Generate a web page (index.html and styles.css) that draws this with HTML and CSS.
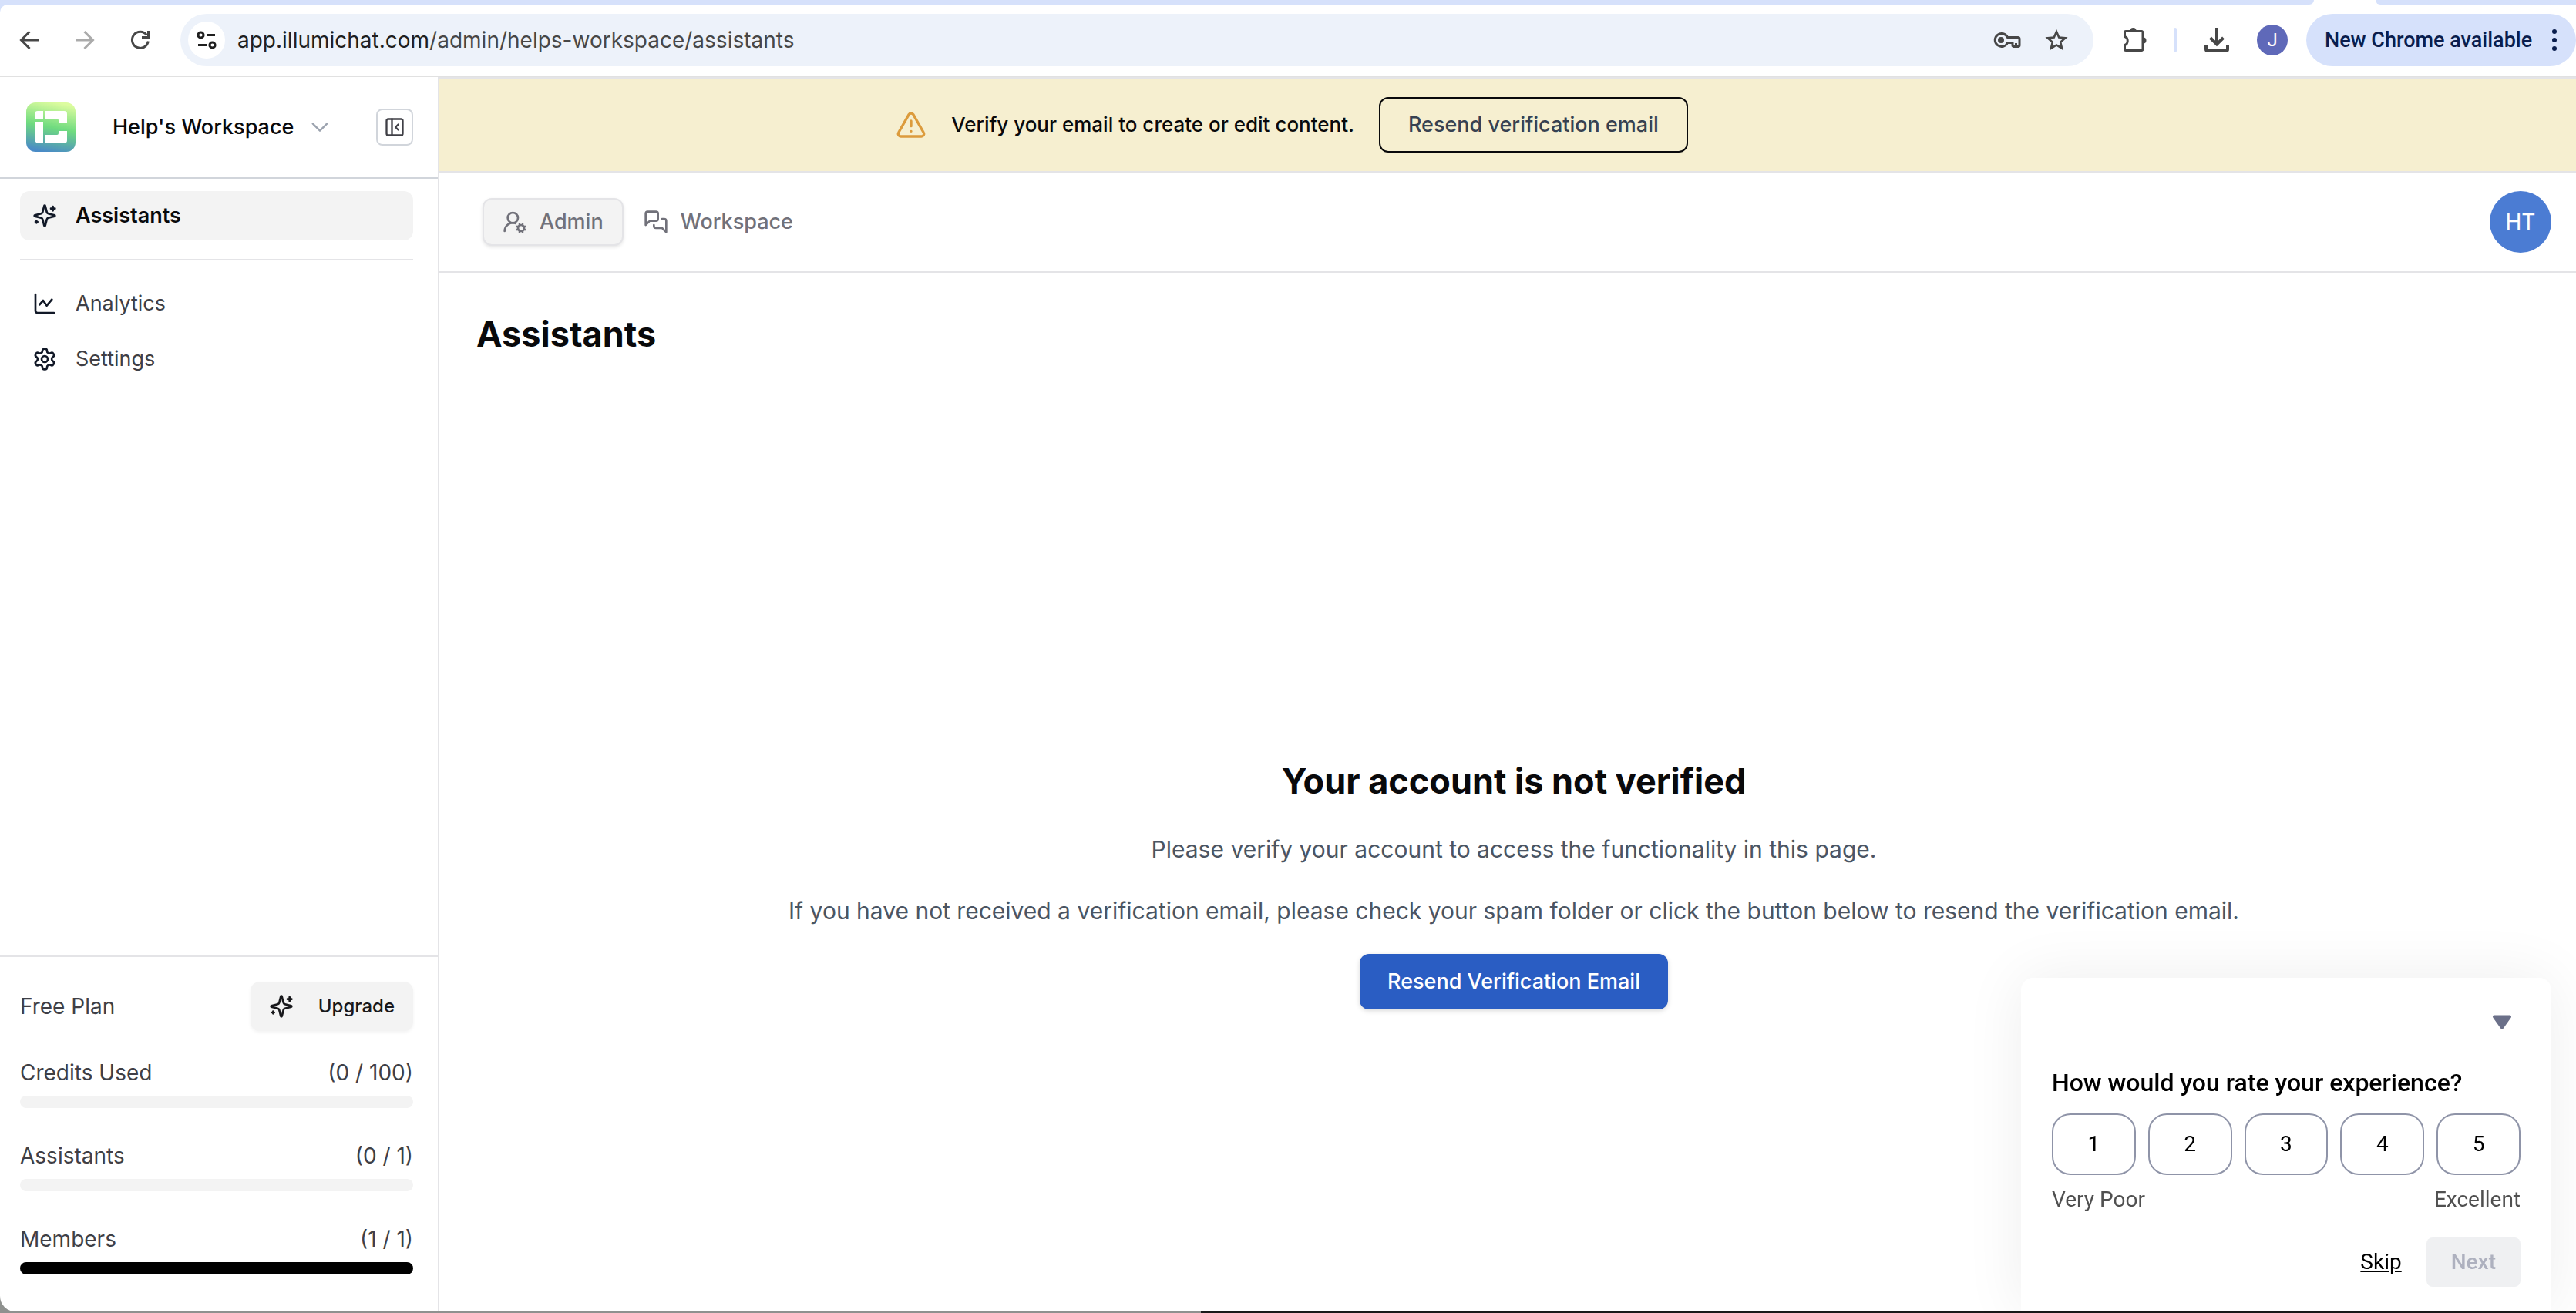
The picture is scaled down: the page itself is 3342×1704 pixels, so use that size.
FILE: index.html
```html
<!DOCTYPE html>
<html lang="en">
<head>
<meta charset="utf-8">
<meta name="viewport" content="width=device-width, initial-scale=1">
<title>Assistants</title>
<link rel="stylesheet" href="styles.css">
</head>
<body>
<div class="window">
  <div class="browser">
    <div class="tabstrip"><div class="tabstrip-left"></div><div class="tabstrip-right"></div></div>
    <div class="toolbar">
      <div class="nav-buttons">
        <button class="icon-button" aria-label="Back"><svg class="icon-36" viewBox="0 0 36 36" fill="none" stroke="#474747" stroke-width="3"><path d="M30 18H8M18.500 7 7.500 18l11 11"/></svg></button>
        <button class="icon-button" aria-label="Forward" disabled><svg class="icon-36" viewBox="0 0 36 36" fill="none" stroke="#ababab" stroke-width="3"><path d="M6 18h22M17.500 7l11 11-11 11"/></svg></button>
        <button class="icon-button" aria-label="Reload"><svg class="icon-36" viewBox="0 0 36 36" fill="none" stroke="#474747" stroke-width="3"><path d="M28.300 19.500A10.500 10.500 0 1 1 26.300 11.500M28.500 6v8.500H20"/></svg></button>
      </div>
      <div class="omnibox">
        <button class="site-info" aria-label="View site information"><svg class="icon-28" viewBox="0 0 28 28" fill="none" stroke="#1f1f1f" stroke-width="3"><circle cx="6.500" cy="7.500" r="3.600"/><path d="M14 7.500h11M3 20.500h11"/><circle cx="21.500" cy="20.500" r="3.600"/></svg></button>
        <div class="url" role="textbox" aria-label="Address">app.illumichat.com<span class="url-path">/admin/helps-workspace/assistants</span></div>
        <button class="icon-button" aria-label="Passwords"><svg class="icon-36" viewBox="0 0 36 36" fill="none" stroke="#474747" stroke-width="3"><path d="M18.500 14.500H32a2 2 0 0 1 2 2V25a1.500 1.500 0 0 1-1.500 1.500h-6A1.500 1.500 0 0 1 25 25v-3.500h-6.500A8.500 8.500 0 1 1 18.500 14.500z"/><circle cx="10" cy="18" r="4" fill="#474747" stroke="none"/><path d="M29.500 22v4"/></svg></button>
        <button class="icon-button" aria-label="Bookmark this tab"><svg class="icon-32" viewBox="0 0 32 32" fill="none" stroke="#474747" stroke-width="2.600"><path d="m16 5 3.200 7.600 8.200.7-6.200 5.400 1.900 8-7.100-4.300-7.100 4.300 1.900-8-6.200-5.400 8.200-.7z"/></svg></button>
      </div>
      <div class="actions">
        <button class="icon-button" aria-label="Extensions"><svg class="icon-36" viewBox="0 0 36 36" fill="none" stroke="#474747" stroke-width="3"><path d="M4.500 8a1.500 1.500 0 0 1 1.500-1.500h20.500A1.500 1.500 0 0 1 28 8v22a1.500 1.500 0 0 1-1.500 1.500H6A1.500 1.500 0 0 1 4.500 30v-5.500c5-1.500 5-9.500 0-11z"/><path d="M11.500 6a4 4 0 0 1 8 0zM28.500 14.500a4 4 0 0 1 0 8z" fill="#474747" stroke="none"/></svg></button>
        <div class="divider"></div>
        <button class="icon-button" aria-label="Downloads"><svg class="icon-40" viewBox="0 0 40 40" fill="none" stroke="#474747" stroke-width="4"><path d="M20 4v21M11.500 17l8.500 8.500 8.500-8.500M6 26v6a2 2 0 0 0 2 2h24a2 2 0 0 0 2-2v-6"/></svg></button>
        <button class="profile" aria-label="Profile">J</button>
      </div>
      <button class="update">New Chrome available<svg class="dots" viewBox="0 0 8 32" fill="#0a1d4d"><circle cx="4" cy="5" r="3"/><circle cx="4" cy="16" r="3"/><circle cx="4" cy="27" r="3"/></svg></button>
    </div>
  </div>

  <div class="app">
    <aside class="sidebar">
      <div class="brand">
        <svg class="logo" viewBox="0 0 64 64"><defs><linearGradient id="brand-fill" x1="0.600" y1="0" x2="0.400" y2="1"><stop offset="0" stop-color="#dcfc9f"/><stop offset=".5" stop-color="#6fdb7f"/><stop offset="1" stop-color="#4a8bc6"/></linearGradient></defs><rect width="64" height="64" rx="12" fill="url(#brand-fill)"/><path fill="#fff" d="M15 11h7v10H11v-6a4 4 0 0 1 4-4zM11 25h11v28h-6a5 5 0 0 1-5-5zM25 11h24a4 4 0 0 1 4 4v12H42v-4a2 2 0 0 0-2-2H25zM25 53V42h15a2 2 0 0 0 2-2v-3h11v12a4 4 0 0 1-4 4z"/></svg>
        <button class="workspace">Help's Workspace<svg class="icon-28" viewBox="0 0 24 24" fill="none" stroke="#9ca3af" stroke-width="2" stroke-linecap="round" stroke-linejoin="round"><path d="m4 8 8 8 8-8"/></svg></button>
        <button class="collapse" aria-label="Collapse sidebar"><svg class="icon-28" viewBox="0 0 24 24" fill="none" stroke="#3f3f46" stroke-width="2" stroke-linecap="round" stroke-linejoin="round"><rect x="3" y="3" width="18" height="18" rx="2"/><path d="M9 3v18M16 15l-3-3 3-3"/></svg></button>
      </div>
      <nav class="side-nav">
        <a class="side-link side-link-active" href="#assistants"><svg class="icon-32 line" viewBox="0 0 24 24"><path d="M9.937 15.500A2 2 0 0 0 8.500 14.063l-6.135-1.582a.5.5 0 0 1 0-.962L8.500 9.936A2 2 0 0 0 9.937 8.500l1.582-6.135a.5.5 0 0 1 .963 0L14.063 8.500A2 2 0 0 0 15.500 9.937l6.135 1.581a.5.5 0 0 1 0 .964L15.500 14.063a2 2 0 0 0-1.437 1.437l-1.582 6.135a.5.5 0 0 1-.963 0zM20 3v4M22 5h-4M4 17v2M5 18H3"/></svg>Assistants</a>
        <hr class="rule">
        <a class="side-link" href="#analytics"><svg class="icon-32 line" viewBox="0 0 24 24"><path d="M3 3v16a2 2 0 0 0 2 2h16M7 13l3.500-4 3.500 5 5-6"/></svg>Analytics</a>
        <a class="side-link" href="#settings"><svg class="icon-32 line" viewBox="0 0 24 24"><path d="M12.220 2h-.44a2 2 0 0 0-2 2v.18a2 2 0 0 1-1 1.730l-.43.250a2 2 0 0 1-2 0l-.15-.08a2 2 0 0 0-2.730.730l-.22.380a2 2 0 0 0 .730 2.730l.150.100a2 2 0 0 1 1 1.720v.510a2 2 0 0 1-1 1.740l-.150.090a2 2 0 0 0-.730 2.730l.220.380a2 2 0 0 0 2.730.730l.150-.080a2 2 0 0 1 2 0l.430.250a2 2 0 0 1 1 1.730V20a2 2 0 0 0 2 2h.440a2 2 0 0 0 2-2v-.180a2 2 0 0 1 1-1.730l.430-.250a2 2 0 0 1 2 0l.150.080a2 2 0 0 0 2.730-.730l.220-.390a2 2 0 0 0-.730-2.730l-.150-.080a2 2 0 0 1-1-1.740v-.500a2 2 0 0 1 1-1.740l.150-.090a2 2 0 0 0 .730-2.730l-.220-.380a2 2 0 0 0-2.730-.730l-.150.080a2 2 0 0 1-2 0l-.430-.250a2 2 0 0 1-1-1.730V4a2 2 0 0 0-2-2z"/><circle cx="12" cy="12" r="3"/></svg>Settings</a>
      </nav>
      <section class="plan">
        <div class="plan-row"><span>Free Plan</span><button class="upgrade"><svg class="icon-32 line" viewBox="0 0 24 24"><path d="M9.937 15.500A2 2 0 0 0 8.500 14.063l-6.135-1.582a.5.5 0 0 1 0-.962L8.500 9.936A2 2 0 0 0 9.937 8.500l1.582-6.135a.5.5 0 0 1 .963 0L14.063 8.500A2 2 0 0 0 15.500 9.937l6.135 1.581a.5.5 0 0 1 0 .964L15.500 14.063a2 2 0 0 0-1.437 1.437l-1.582 6.135a.5.5 0 0 1-.963 0zM20 3v4M22 5h-4M4 17v2M5 18H3"/></svg>Upgrade</button></div>
        <div class="usage"><div class="usage-row"><label for="credits">Credits Used</label><span>(0 / 100)</span></div><progress id="credits" class="meter" value="0" max="100"></progress></div>
        <div class="usage"><div class="usage-row"><label for="assistant-count">Assistants</label><span>(0 / 1)</span></div><progress id="assistant-count" class="meter" value="0" max="1"></progress></div>
        <div class="usage"><div class="usage-row"><label for="members">Members</label><span>(1 / 1)</span></div><progress id="members" class="meter" value="1" max="1"></progress></div>
      </section>
    </aside>

    <div class="page">
      <div class="banner">
        <svg class="icon-40" viewBox="0 0 24 24" fill="none" stroke="#dc9b3c" stroke-width="2" stroke-linecap="round" stroke-linejoin="round"><path d="m21.730 18-8-14a2 2 0 0 0-3.480 0l-8 14A2 2 0 0 0 4 21h16a2 2 0 0 0 1.730-3M12 9v4M12 17h.01"/></svg>
        <span>Verify your email to create or edit content.</span>
        <button class="banner-button">Resend verification email</button>
      </div>
      <header class="topbar">
        <nav class="tabs">
          <a class="tab tab-active" href="#admin"><svg class="icon-32 line" viewBox="0 0 24 24"><circle cx="10" cy="8" r="5"/><path d="M2 21a8 8 0 0 1 10.434-7.620"/><circle cx="18" cy="18" r="3"/><path d="m14.305 19.530.923-.382M15.228 16.852l-.923-.383M16.852 15.228l-.383-.923M16.852 20.772l-.383.924M19.148 15.228l.383-.923M19.530 21.696l-.382-.924M20.772 16.852l.924-.383M20.772 19.148l.924.383"/></svg>Admin</a>
          <a class="tab" href="#workspace"><svg class="icon-32 line" viewBox="0 0 24 24"><path d="M14 9a2 2 0 0 1-2 2H6l-4 4V4a2 2 0 0 1 2-2h8a2 2 0 0 1 2 2zM18 9h2a2 2 0 0 1 2 2v11l-4-4h-6a2 2 0 0 1-2-2v-1"/></svg>Workspace</a>
        </nav>
        <button class="avatar" aria-label="Account">HT</button>
      </header>
      <main class="content">
        <h1 class="title">Assistants</h1>
        <section class="notice">
          <h2 class="notice-title">Your account is not verified</h2>
          <p class="notice-text">Please verify your account to access the functionality in this page.</p>
          <p class="notice-text">If you have not received a verification email, please check your spam folder or click the button below to resend the verification email.</p>
          <button class="primary">Resend Verification Email</button>
        </section>
      </main>
    </div>
  </div>

  <section class="survey" aria-label="Survey">
    <button class="icon-button survey-close" aria-label="Minimise"><svg class="icon-28" viewBox="0 0 28 28"><path fill="#6b7089" stroke="#6b7089" stroke-width="4" stroke-linejoin="round" d="M4 6.500h20l-10 14z"/></svg></button>
    <h3 class="survey-title">How would you rate your experience?</h3>
    <div class="scores"><button class="score">1</button><button class="score">2</button><button class="score">3</button><button class="score">4</button><button class="score">5</button></div>
    <div class="scale"><span>Very Poor</span><span>Excellent</span></div>
    <div class="survey-actions"><a class="skip" href="#skip">Skip</a><button class="next" disabled>Next</button></div>
  </section>
</div>
</body>
</html>
```
FILE: styles.css
```css
* { box-sizing: border-box; }

body {
  margin: 0;
  background: linear-gradient(90deg, #8f918f 0 1558px, #1a1a1a 1558px);
  font-family: Inter, "Liberation Sans", sans-serif;
  font-size: 28px;
  line-height: 40px;
  color: #09090b;
}

button { margin: 0; padding: 0; border: 0; background: none; font: inherit; color: inherit; }
a { color: inherit; text-decoration: none; }
h1, h2, h3, p { margin: 0; }
svg { display: block; flex: none; }

.icon-28 { width: 28px; height: 28px; }
.icon-32 { width: 32px; height: 32px; }
.icon-36 { width: 36px; height: 36px; }
.icon-40 { width: 40px; height: 40px; }
.line { fill: none; stroke: currentColor; stroke-width: 2; stroke-linecap: round; stroke-linejoin: round; }

.window {
  display: flex;
  flex-direction: column;
  min-height: calc(100vh - 2px);
  margin-bottom: 2px;
  overflow: hidden;
  background: #fff;
  border-bottom-left-radius: 20px;
}

/* Browser chrome */
.browser { background: #d6e1fb; border-bottom: 2px solid #e1e1e1; }
.tabstrip { display: flex; justify-content: space-between; gap: 80px; height: 6px; background: #fff; }
.tabstrip-left { flex: 1; background: #d6e1fb; border-bottom-right-radius: 16px; }
.tabstrip-right { width: 260px; background: #d6e1fb; border-bottom-left-radius: 16px; }
.toolbar { display: flex; align-items: center; height: 92px; padding-left: 20px; background: #fff; border-top-left-radius: 10px; }
.nav-buttons { display: flex; gap: 36px; margin-right: 34px; }
.omnibox { display: flex; flex: 1; align-items: center; gap: 30px; height: 68px; padding: 0 32px 0 10px; background: #edf2fa; border-radius: 34px; }
.site-info { display: grid; place-items: center; width: 48px; height: 48px; margin-right: -14px; background: #fff; border-radius: 50%; }
.url { flex: 1; color: #1f1f1f; }
.url-path { color: #474747; }
.actions { display: flex; align-items: center; gap: 32px; margin: 0 24px 0 36px; }
.divider { width: 4px; height: 32px; background: #d6e1fb; border-radius: 2px; }
.profile { width: 40px; height: 40px; background: #5f69b9; border-radius: 50%; color: #fff; font: 24px/40px Roboto, sans-serif; }
.update { display: flex; align-items: center; justify-content: space-between; width: 350px; height: 68px; padding: 0 24px; background: #d6e1fb; border-radius: 34px; color: #0a1d4d; font: 500 27px/40px Roboto, sans-serif; }
.dots { width: 8px; height: 32px; }

/* Sidebar */
.app { display: flex; flex: 1; }
.sidebar { display: flex; flex: none; flex-direction: column; width: 570px; border-right: 2px solid #e4e4e7; }
.brand { display: flex; align-items: center; height: 132px; padding: 0 32px 0 34px; border-bottom: 2px solid #d1d5db; }
.logo { width: 64px; height: 64px; }
.workspace { display: flex; flex: 1; align-items: center; gap: 20px; margin-left: 48px; font-size: 27px; font-weight: 500; }
.collapse { display: grid; place-items: center; width: 48px; height: 48px; border: 2px solid #d1d5db; border-radius: 8px; }
.side-nav { display: flex; flex: 1; flex-direction: column; gap: 8px; padding: 16px 32px 16px 26px; }
.side-link { display: flex; align-items: center; gap: 24px; height: 64px; padding: 0 16px; border-radius: 12px; font-size: 27px; color: #3f3f46; }
.side-link svg { color: #111827; }
.side-link-active { background: #f3f3f3; color: #09090b; font-weight: 600; }
.rule { width: 100%; height: 2px; margin: 16px 0; border: 0; background: #e4e4e7; }
.plan { padding: 32px 32px 48px 26px; border-top: 2px solid #e4e4e7; color: #3f3f46; }
.plan-row { display: flex; align-items: center; justify-content: space-between; margin-bottom: 34px; }
.upgrade { display: flex; align-items: center; gap: 32px; height: 64px; padding: 0 24px; background: #f3f3f3; border-radius: 12px; box-shadow: 0 2px 4px rgba(0, 0, 0, .05); color: #18181b; font-size: 24px; font-weight: 500; }
.usage + .usage { margin-top: 42px; }
.usage-row { display: flex; justify-content: space-between; margin-bottom: 10px; }
.meter { display: block; width: 100%; height: 16px; appearance: none; border: 0; border-radius: 8px; overflow: hidden; background: #f3f3f3; }
.meter::-webkit-progress-bar { background: #f3f3f3; }
.meter::-webkit-progress-value { background: #000; }

/* Page */
.page { display: flex; flex: 1; flex-direction: column; min-width: 0; }
.banner { display: flex; align-items: center; justify-content: center; gap: 32px; height: 124px; padding-right: 560px; background: #f6efd0; border-top: 2px solid #e4e4e7; border-bottom: 2px solid #e4e4e7; font-size: 26px; font-weight: 500; }
.banner-button { height: 72px; padding: 0 36px; border: 2px solid #09090b; border-radius: 12px; color: #374151; font-size: 27px; }
.topbar { display: flex; align-items: center; justify-content: space-between; height: 130px; padding: 0 32px 0 56px; border-bottom: 2px solid #e4e4e7; }
.tabs { display: flex; }
.tab { display: flex; align-items: center; gap: 16px; height: 62px; padding: 0 24px; border: 2px solid transparent; border-radius: 12px; color: #71717a; font-size: 27px; font-weight: 500; }
.tab-active { background: #f3f3f3; border-color: #e4e4e7; box-shadow: 0 2px 4px rgba(0, 0, 0, .1); }
.avatar { width: 80px; height: 80px; background: #4b7cd3; border-radius: 50%; color: #fff; }
.content { display: flex; flex: 1; flex-direction: column; padding: 48px 32px 0 48px; }
.title { font-size: 45px; line-height: 64px; font-weight: 700; }
.notice { display: flex; flex: 1; flex-direction: column; align-items: center; justify-content: center; gap: 32px; padding-top: 124px; text-align: center; }
.notice-title { font-size: 45px; line-height: 64px; font-weight: 700; }
.notice-text { font-size: 30px; line-height: 48px; color: #4b5563; }
.primary { height: 72px; padding: 0 36px; background: #2a5dc3; border-radius: 12px; box-shadow: 0 2px 6px rgba(0, 0, 0, .15); color: #fff; font-size: 27px; font-weight: 500; }

/* Survey card, floating over the page */
.survey { position: fixed; right: 32px; bottom: 2px; display: flex; flex-direction: column; width: 688px; padding: 40px 40px 32px; background: #fff; border-radius: 16px 16px 0 0; box-shadow: 0 0 80px rgba(0, 0, 0, .07); color: #000; font-family: Roboto, "Liberation Sans", sans-serif; }
.survey-close { align-self: flex-end; margin: 4px 10px 44px 0; }
.survey-title { margin-bottom: 20px; font-size: 32px; line-height: 40px; font-weight: 500; }
.scores { display: grid; grid-template-columns: repeat(5, 1fr); gap: 16px; margin-bottom: 12px; }
.score { height: 80px; border: 2px solid #8f94a8; border-radius: 24px; }
.scale { display: flex; justify-content: space-between; margin-bottom: 29px; color: #505050; }
.survey-actions { display: flex; align-items: center; justify-content: flex-end; gap: 32px; }
.skip { text-decoration: underline; }
.next { height: 64px; padding: 0 32px; background: #eff0f2; border-radius: 8px; color: #aeb1bf; font-weight: 500; }
```
